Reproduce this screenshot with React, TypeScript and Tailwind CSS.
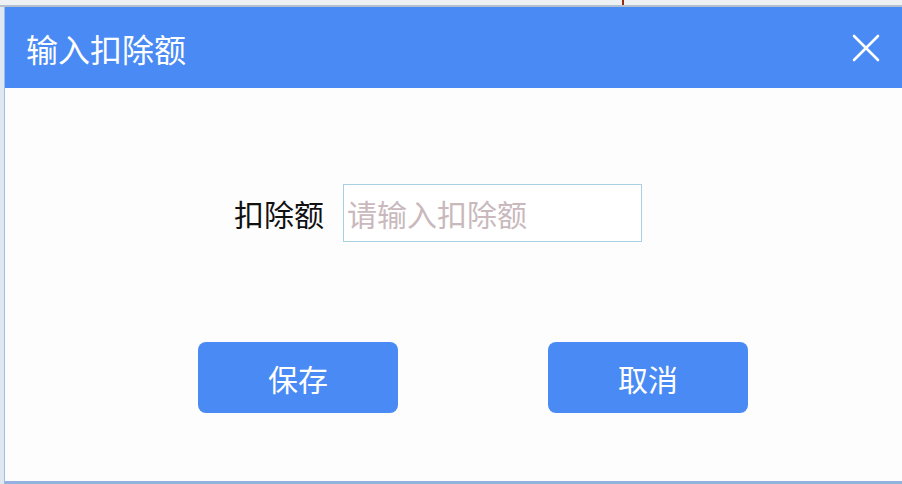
const cjk = { fontFamily: '"Noto Sans CJK SC", "Noto Sans", sans-serif' };

function CloseIcon() {
    return (
        <svg width="28" height="28" viewBox="0 0 28 28" className="text-white">
            <path d="M2 2 L26 26 M26 2 L2 26" stroke="currentColor" strokeWidth="2.6" strokeLinecap="round" fill="none" />
        </svg>
    );
}

export default function App() {
    return (
        <div className="w-[902px] h-[484px] flex flex-col bg-[#e4e9ef] overflow-hidden" style={cjk}>
            {/* page behind the dialog */}
            <div className="h-[7px] shrink-0 flex border-b-2 border-[#b4c0ce] bg-[#eef1f4]">
                <div className="w-[622px]" />
                <div className="w-[2px] bg-[#9a2a14]" />
            </div>
            <div className="flex-1 flex min-h-0">
                <div className="w-[5px] shrink-0 bg-[#dfe8f2] border-r border-[#9dbde3]" />
                <div className="flex-1 flex flex-col bg-white border-b-[3px] border-[#93b2e0]">
                    <div className="h-[81px] shrink-0 bg-[#4a8af4] flex items-center justify-between pl-[21px] pr-[22px]">
                        <span className="text-white text-[32px] leading-none">输入扣除额</span>
                        <CloseIcon />
                    </div>
                    <div className="flex-1 flex flex-col bg-[#fdfdfe]">
                        <div className="flex items-center pt-[96px] pl-[229px]">
                            <span className="text-[30px] leading-none text-[#111]">扣除额</span>
                            <input
                                type="text"
                                placeholder="请输入扣除额"
                                className="ml-[19px] w-[299px] h-[58px] border border-[#a8d0e4] bg-white px-[3px] text-[30px] outline-none placeholder:text-[#c9b9bd]"
                                style={cjk}
                            />
                        </div>
                        <div className="flex pt-[100px] pl-[193px] gap-[150px]">
                            <button className="w-[200px] h-[71px] rounded-[8px] bg-[#4a8af4] text-white text-[30px] leading-none">保存</button>
                            <button className="w-[200px] h-[71px] rounded-[8px] bg-[#4a8af4] text-white text-[30px] leading-none">取消</button>
                        </div>
                    </div>
                </div>
            </div>
        </div>
    );
}
